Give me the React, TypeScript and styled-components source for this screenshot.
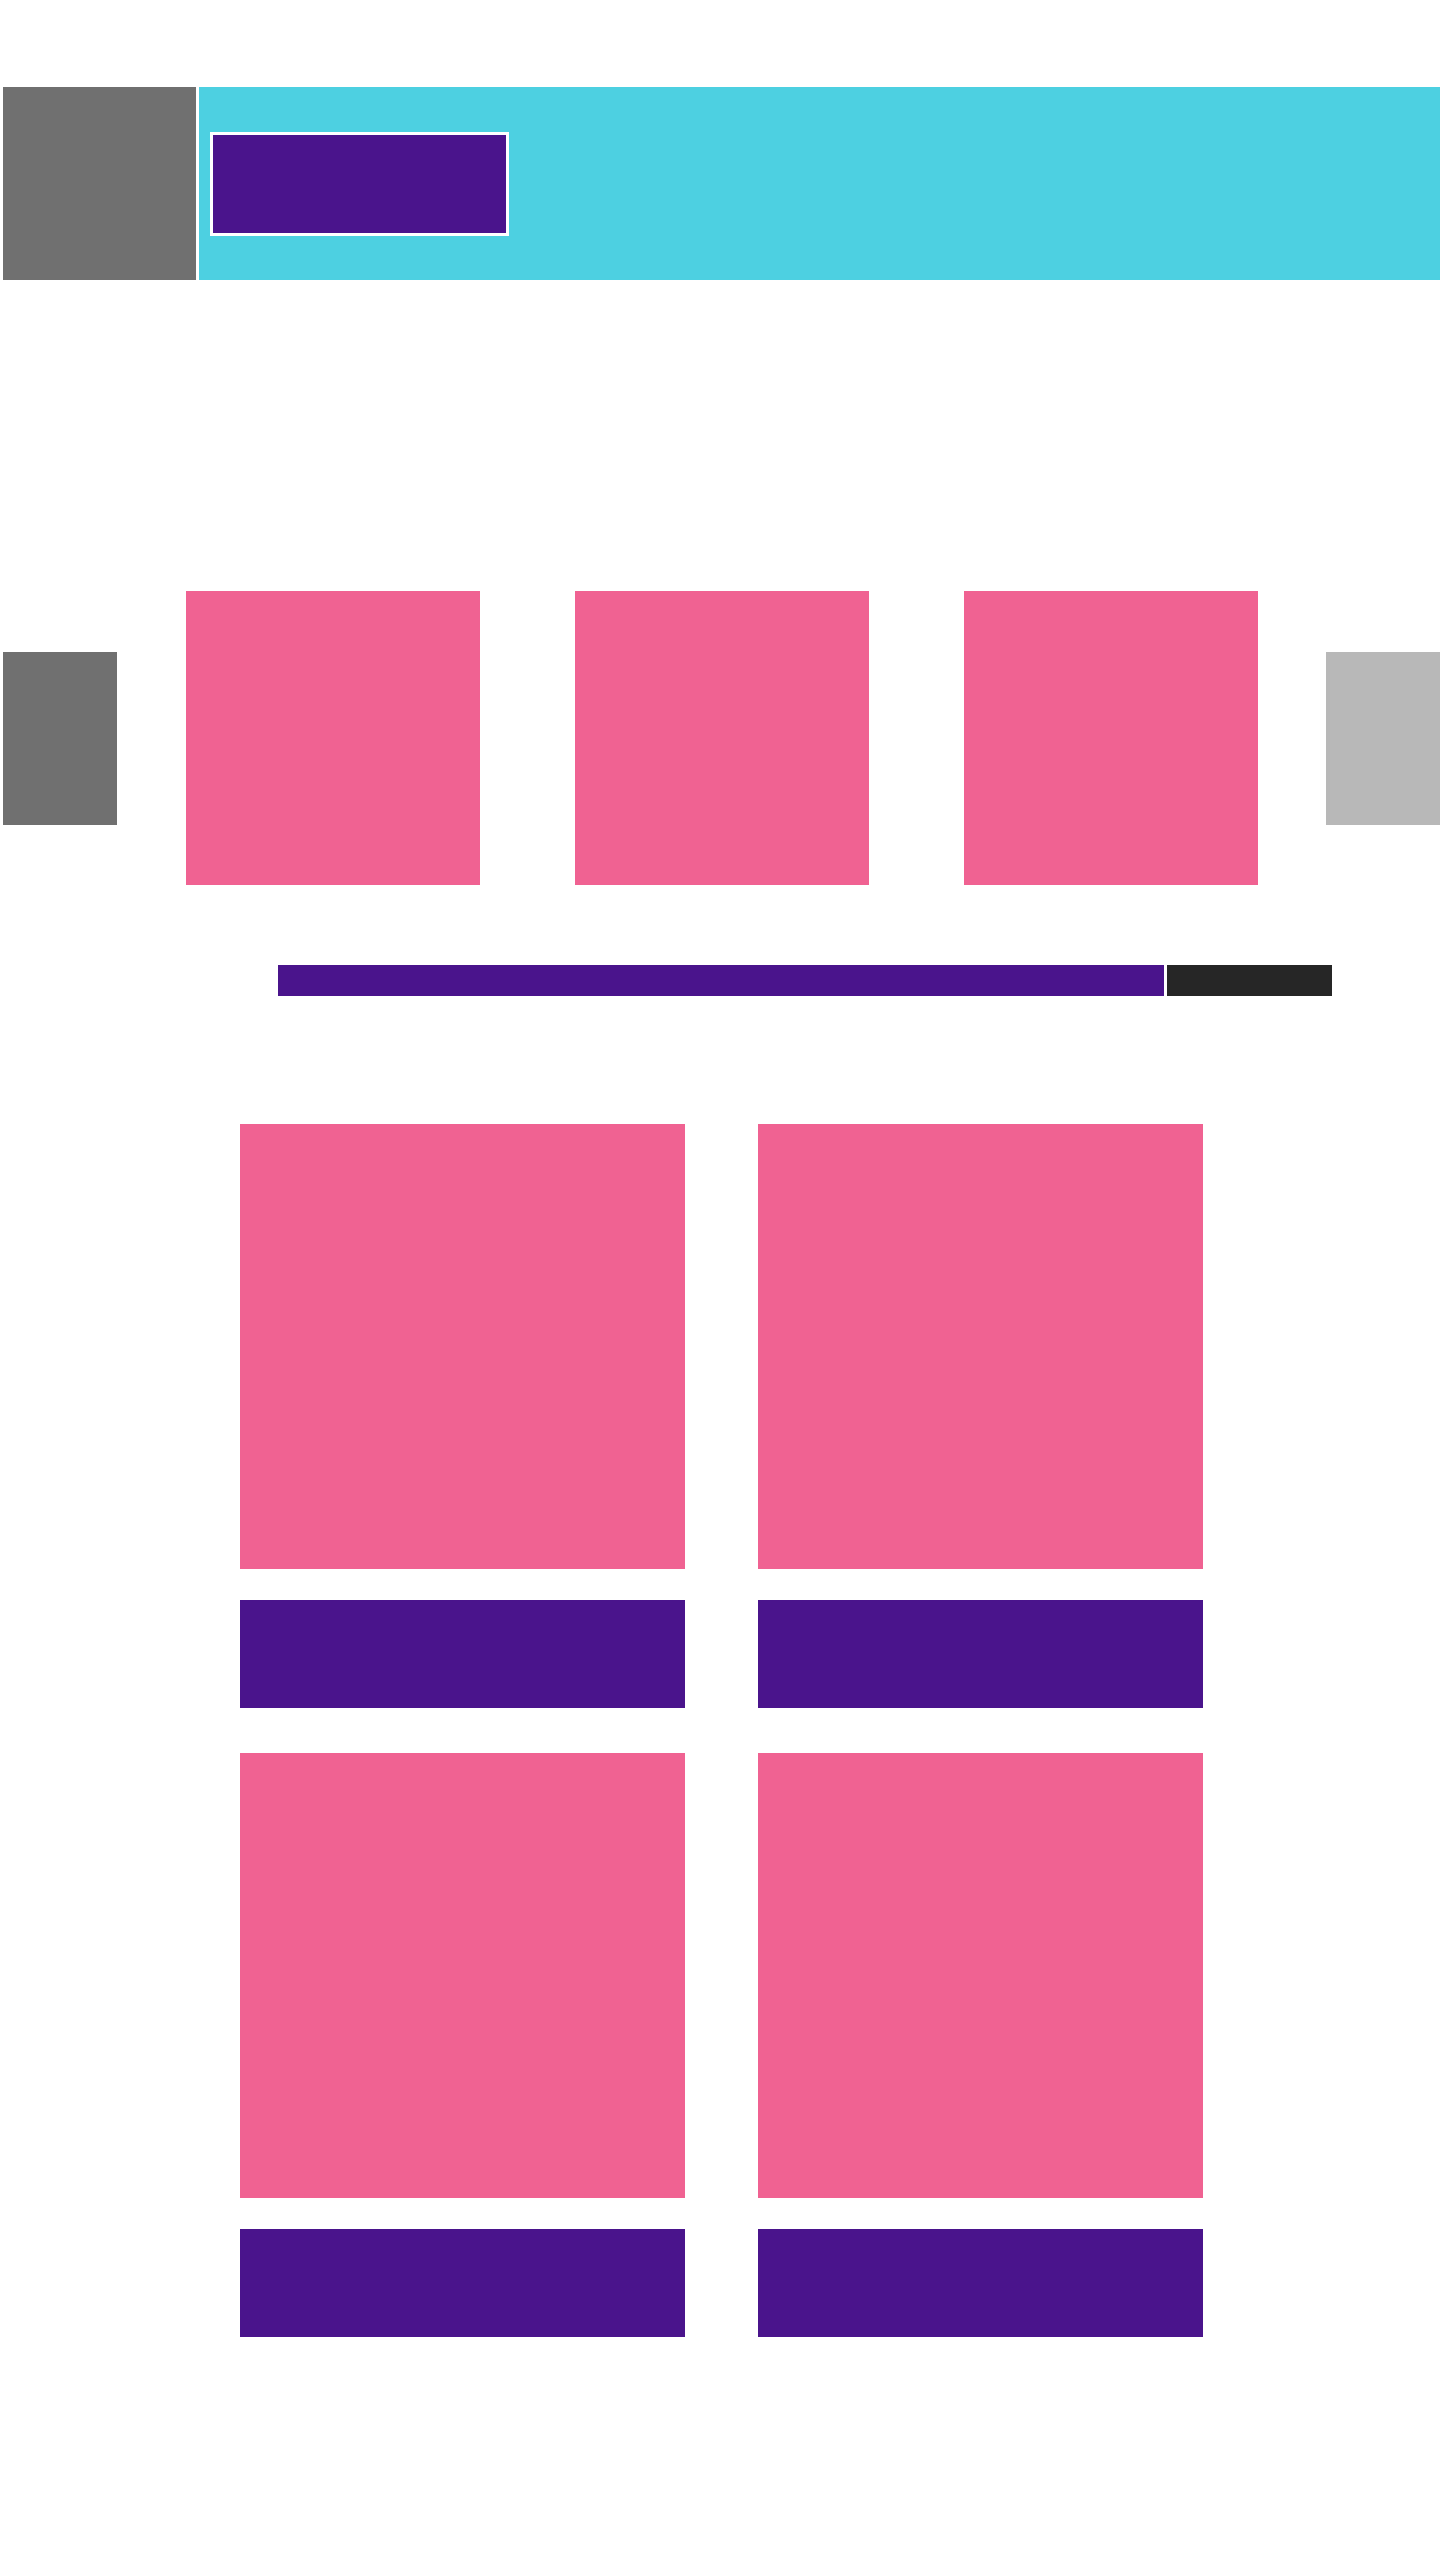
import React from "react";
import styled, { createGlobalStyle } from "styled-components";

const colors = {
  gray: "#707070",
  lightGray: "#b8b8b8",
  cyan: "#4dd0e1",
  purple: "#4a148c",
  pink: "#f06292",
  dark: "#262626",
};

const GlobalStyle = createGlobalStyle`
  html, body {
    margin: 0;
    padding: 0;
    background: #ffffff;
    font-family: "Liberation Sans", Arial, sans-serif;
  }
  * {
    box-sizing: border-box;
  }
`;

export default function App() {
  return (
    <>
      <GlobalStyle />
      <Page>
        <Header>
          <Logo />
          <NavBar>
            <NavButton />
          </NavBar>
        </Header>

        <Carousel>
          <Arrow $tone={colors.gray} />
          <Slides>
            {[0, 1, 2].map((i) => (
              <Slide key={i} />
            ))}
          </Slides>
          <Arrow $tone={colors.lightGray} />
        </Carousel>

        <Progress>
          <ProgressFill />
          <ProgressRest />
        </Progress>

        <Grid>
          {[0, 1, 2, 3].map((i) => (
            <Tile key={i}>
              <TileImage />
              <TileCaption />
            </Tile>
          ))}
        </Grid>
      </Page>
    </>
  );
}

const Page = styled.main`
  width: 1440px;
  min-height: 2560px;
  padding-top: 87px;
  background: #ffffff;
`;

const Header = styled.header`
  display: flex;
  gap: 3px;
  height: 193px;
  padding-left: 3px;
`;

const Logo = styled.div`
  width: 193px;
  flex-shrink: 0;
  background-color: ${colors.gray};
`;

const NavBar = styled.nav`
  flex: 1;
  display: flex;
  align-items: center;
  padding-left: 11px;
  background-color: ${colors.cyan};
`;

const NavButton = styled.button`
  width: 299px;
  height: 104px;
  padding: 0;
  border: 3px solid #ffffff;
  background-color: ${colors.purple};
  cursor: pointer;
`;

const Carousel = styled.section`
  display: flex;
  align-items: center;
  justify-content: space-between;
  margin-top: 311px;
  padding-left: 3px;
`;

const Arrow = styled.div<{ $tone: string }>`
  width: 114px;
  height: 173px;
  background-color: ${(p) => p.$tone};
`;

const Slides = styled.div`
  display: flex;
  gap: 95px;
`;

const Slide = styled.div`
  width: 294px;
  height: 294px;
  background-color: ${colors.pink};
`;

const Progress = styled.div`
  display: flex;
  gap: 3px;
  height: 31px;
  margin-top: 80px;
  margin-left: 278px;
`;

const ProgressFill = styled.div`
  width: 886px;
  background-color: ${colors.purple};
`;

const ProgressRest = styled.div`
  width: 165px;
  background-color: ${colors.dark};
`;

const Grid = styled.section`
  display: grid;
  grid-template-columns: repeat(2, 445px);
  justify-content: center;
  column-gap: 73px;
  row-gap: 45px;
  margin-top: 128px;
  padding-left: 3px;
`;

const Tile = styled.article`
  display: flex;
  flex-direction: column;
  gap: 31px;
`;

const TileImage = styled.div`
  width: 445px;
  height: 445px;
  background-color: ${colors.pink};
`;

const TileCaption = styled.div`
  width: 445px;
  height: 108px;
  background-color: ${colors.purple};
`;
